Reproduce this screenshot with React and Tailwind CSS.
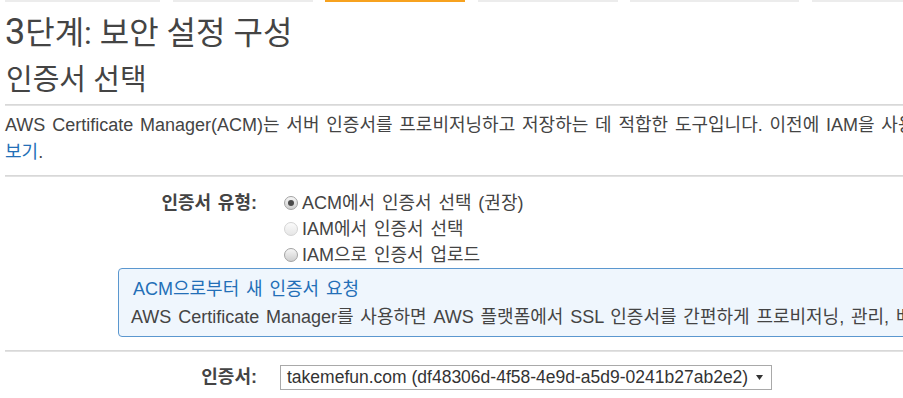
const tabs = [
  { w: "w-[155px]", ml: "ml-0", on: false },
  { w: "w-[140px]", ml: "ml-[13px]", on: false },
  { w: "w-[140px]", ml: "ml-[12px]", on: true },
  { w: "w-[140px]", ml: "ml-[13px]", on: false },
  { w: "w-[169px]", ml: "ml-[12px]", on: false },
  { w: "w-[200px]", ml: "ml-[13px]", on: false },
];

const Radio = ({ checked, disabled }) => {
  if (disabled) {
    return (
      <span className="w-[14px] h-[14px] shrink-0 rounded-full border border-[#d4d4d4] bg-linear-to-b from-[#fbfbfb] to-[#e6e6e6]" />
    );
  }
  return (
    <span className="w-[14px] h-[14px] shrink-0 rounded-full border border-[#a3a3a3] bg-linear-to-b from-[#f6f6f6] to-[#cfcfcf] flex items-center justify-center">
      {checked && <span className="w-[6px] h-[6px] rounded-full bg-[#4a4a4a]" />}
    </span>
  );
};

const Divider = () => <div className="h-[2px] bg-[#e2e2e2] border-t border-[#d8d8d8]" />;

export default function App() {
  return (
    <div className="w-[903px] h-[398px] overflow-hidden bg-white text-[#444] text-[18px] [word-spacing:1.8px] font-['Liberation_Sans','Noto_Sans_CJK_KR',sans-serif]">
      <div className="flex pl-[5px]">
        {tabs.map((t, i) => (
          <div
            key={i}
            className={`${t.w} ${t.ml} shrink-0 h-[2px] ${t.on ? "bg-[#f7a21f]" : "bg-[#ececec]"}`}
          />
        ))}
      </div>

      <div className="pl-[5px] w-[1400px]">
        <h1 className="mt-[13px] h-[36px] text-[32px] leading-[36px] [word-spacing:0px] text-[#444] font-['Roboto','Noto_Sans_CJK_KR',sans-serif]">
          <span className="text-[36px] leading-[0]">3</span>단계: 보안 설정 구성
        </h1>
        <h2 className="mt-[12px] h-[34px] text-[29px] leading-[34px] [word-spacing:0px] pl-[1px] font-['Roboto','Noto_Sans_CJK_KR',sans-serif]">
          인증서 선택
        </h2>

        <div className="mt-[7px]">
          <Divider />
        </div>

        <div className="pt-[6px] leading-[27px] whitespace-nowrap">
          <p>
            AWS Certificate Manager(ACM)는 서버 인증서를 프로비저닝하고 저장하는 데 적합한 도구입니다. 이전에 IAM을 사용하여 인증서를 업로드한 경우 IAM에서 인증서를 선택할 수 있습니다. 자세히
          </p>
          <p>
            <a className="text-[#236fb7]">보기</a>.
          </p>
        </div>

        <div className="mt-[9px]">
          <Divider />
        </div>

        <div className="pt-[13px] flex">
          <div className="w-[252px] shrink-0 text-right font-bold leading-[26px]">인증서 유형:</div>
          <div className="ml-[27px] flex flex-col leading-[26px]">
            <label className="flex items-center gap-[4px]">
              <Radio checked />
              <span>ACM에서 인증서 선택 (권장)</span>
            </label>
            <label className="flex items-center gap-[4px]">
              <Radio disabled />
              <span>IAM에서 인증서 선택</span>
            </label>
            <label className="flex items-center gap-[4px]">
              <Radio />
              <span>IAM으로 인증서 업로드</span>
            </label>
          </div>
        </div>

        <div className="ml-[113px] w-[1100px] rounded-[4px] border border-[#5b97cf] bg-[#eff6fd] pt-[7px] pb-[6px] pl-[12px] leading-[26px] whitespace-nowrap">
          <p className="pl-[2px] text-[#236fb7]">ACM으로부터 새 인증서 요청</p>
          <p className="mt-[2px]">
            AWS Certificate Manager를 사용하면 AWS 플랫폼에서 SSL 인증서를 간편하게 프로비저닝, 관리, 배포할 수 있습니다.
          </p>
        </div>

        <div className="mt-[13px]">
          <Divider />
        </div>

        <div className="pt-[12px] flex items-center">
          <div className="w-[252px] shrink-0 text-right font-bold">인증서:</div>
          <div className="ml-[23px] w-[492px] h-[25px] border border-[#a9a9a9] bg-white flex items-center justify-between pl-[6px] pr-[8px] text-[17.5px] [word-spacing:0px] text-[#333]">
            <span className="whitespace-nowrap">takemefun.com (df48306d-4f58-4e9d-a5d9-0241b27ab2e2)</span>
            <svg width="7" height="5" viewBox="0 0 7 5">
              <path d="M0 0 L7 0 L3.5 5 Z" fill="#333" />
            </svg>
          </div>
        </div>
      </div>
    </div>
  );
}
